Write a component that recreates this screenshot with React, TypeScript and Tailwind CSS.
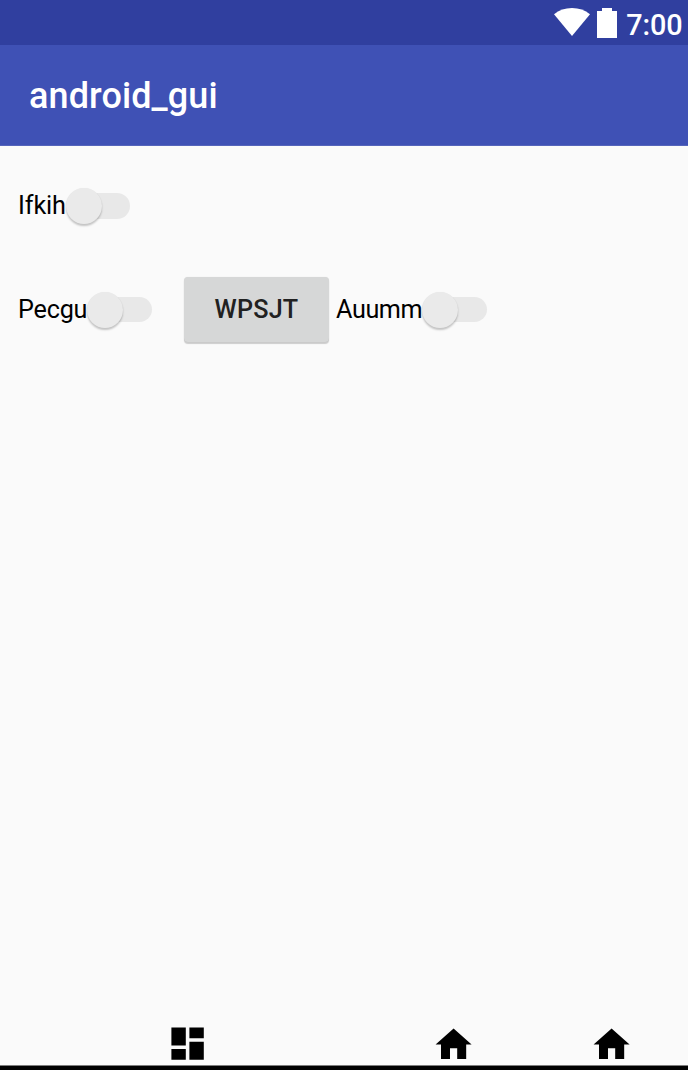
type SwitchProps = { label: string; labelClass: string };

function LabeledSwitch({ label, labelClass }: SwitchProps) {
  return (
    <label className="flex h-9 items-center text-[25.2px] leading-9 text-black">
      <span className={`shrink-0 whitespace-nowrap ${labelClass}`}>{label}</span>
      <span className="relative flex h-9 w-[64.500px] shrink-0 items-center justify-end">
        <span className="h-[25.500px] w-[54px] rounded-full bg-[#e8e8e8]" />
        <span className="absolute top-0 left-0 size-9 rounded-full bg-[#eaeaea] shadow-[0_2px_2px_rgba(0,0,0,0.22),0_0_1px_rgba(0,0,0,0.06)]" />
      </span>
    </label>
  );
}

function HomeIcon() {
  return (
    <svg viewBox="0 0 24 24" className="size-[43.2px]" fill="#000">
      <path d="M10 20v-6h4v6h5v-8h3L12 3 2 12h3v8z" />
    </svg>
  );
}

function DashboardIcon() {
  return (
    <svg viewBox="0 0 24 24" className="size-[43.2px]" fill="#000">
      <path d="M3 13h8V3H3v10zm0 8h8v-6H3v6zm10 0h8V11h-8v10zm0-18v6h8V3h-8z" />
    </svg>
  );
}

export default function App() {
  return (
    <div className="flex h-[1070px] w-[688px] flex-col overflow-hidden bg-[#fafafa] font-['Roboto',sans-serif]">
      <div className="flex h-[45px] shrink-0 items-start justify-end bg-[#303f9f] pr-[5.500px] text-white">
        <svg viewBox="0 0 36 28" className="mt-2 h-7 w-9" fill="#fff">
          <path d="M0 6.2C5 2.2 11 0 18 0s13 2.200 18 6.200L18 28z" />
        </svg>
        <svg viewBox="0 0 20 30" className="mt-2 ml-[6.500px] h-[30px] w-5" fill="#fff">
          <path d="M5 0h10v3h5v27H0V3h5z" />
        </svg>
        <span className="ml-[9.500px] pt-2 text-[28.8px] leading-[34px] font-medium tracking-[-0.100px]">7:00</span>
      </div>
      <header className="flex h-[101px] shrink-0 items-center border-b border-[#5565bb] bg-[#3f51b5] pt-[2px] pl-[29px]">
        <h1 className="text-[36px] leading-[42px] font-medium tracking-[0.100px] text-white">android_gui</h1>
      </header>
      <main className="flex grow flex-col pt-[42px] pl-[18px]">
        <LabeledSwitch label="Ifkih" labelClass="w-[47.500px] tracking-[-0.100px]" />
        <div className="mt-[52.500px] flex h-[66px] items-center">
          <LabeledSwitch label="Pecgu" labelClass="w-[69px] tracking-[-0.200px]" />
          <button className="ml-[32.500px] h-[64.500px] w-[145px] rounded-[4px] bg-[#d6d7d7] text-[25.2px] font-medium tracking-[0.200px] text-[#212121] shadow-[0_2px_1px_rgba(0,0,0,0.18),0_0_1px_rgba(0,0,0,0.12)]">
            WPSJT
          </button>
          <div className="ml-[7px]">
            <LabeledSwitch label="Auumm" labelClass="w-[86px] tracking-[-0.400px]" />
          </div>
        </div>
      </main>
      <nav className="flex h-[43.2px] shrink-0 pl-[165.500px]">
        <DashboardIcon />
        <div className="ml-[223px] flex gap-[115.200px] pt-[0.800px]">
          <HomeIcon />
          <HomeIcon />
        </div>
      </nav>
      <div className="h-[5px] shrink-0 border-t border-[#7c7c7c] bg-black" />
    </div>
  );
}
